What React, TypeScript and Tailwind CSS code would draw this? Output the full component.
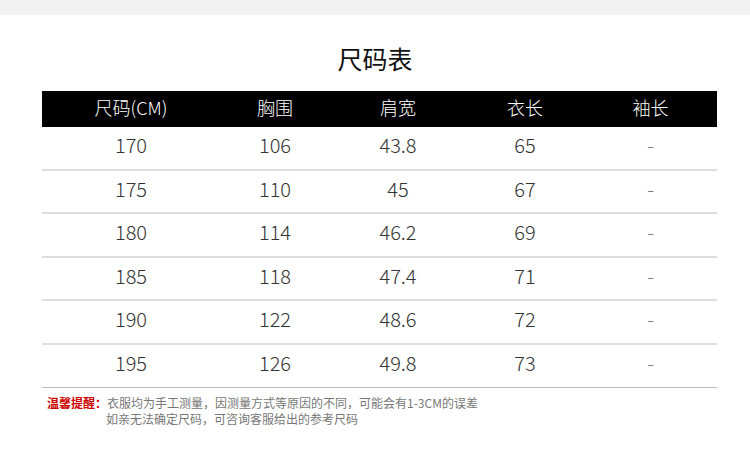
const FONT = { fontFamily: '"Noto Sans CJK SC", "Noto Sans", sans-serif' };

const COLS = ['w-[178px]', 'w-[110px]', 'w-[136px]', 'w-[118px]', 'w-[133px]'];
const HEAD = ['尺码(CM)', '胸围', '肩宽', '衣长', '袖长'];

const ROWS = [
  ['170', '106', '43.8', '65', '-'],
  ['175', '110', '45', '67', '-'],
  ['180', '114', '46.2', '69', '-'],
  ['185', '118', '47.4', '71', '-'],
  ['190', '122', '48.6', '72', '-'],
  ['195', '126', '49.8', '73', '-'],
];

export default function App() {
  return (
    <div className="w-[750px] h-[452px] bg-white overflow-hidden" style={FONT}>
      <div className="h-[15px] bg-[#f2f2f2]" />

      <h1 className="h-[76px] pt-[25px] text-center text-[25px] leading-[36px] text-[#111] font-normal">
        尺码表
      </h1>

      <div className="mx-[42px] w-[675px]">
        {/* header */}
        <div className="flex h-[36px] pb-[3px] bg-black text-white text-[18px] font-light items-center">
          {HEAD.map((h, i) => (
            <div key={h} className={`${COLS[i]} text-center`}>
              {h}
            </div>
          ))}
        </div>

        {/* rows */}
        {ROWS.map((r, ri) => (
          <div
            key={r[0]}
            className={`flex items-center pb-[5px] text-[20px] font-light text-[#333] ${
              ri === ROWS.length - 1
                ? 'h-[43.5px] border-b border-[#bbb]'
                : 'h-[43.5px] border-b-2 border-[#ddd]'
            }`}
          >
            {r.map((v, i) => (
              <div key={i} className={`${COLS[i]} text-center ${i === 4 ? 'text-[#777]' : ''}`}>
                {v}
              </div>
            ))}
          </div>
        ))}
      </div>

      {/* note */}
      <div className="ml-[47px] mt-[7px] text-[12px] leading-[16px] text-[#777]">
        <div>
          <span className="text-[#c00] font-bold">温馨提醒：</span>
          衣服均为手工测量，因测量方式等原因的不同，可能会有1-3CM的误差
        </div>
        <div className="pl-[59px]">如亲无法确定尺码，可咨询客服给出的参考尺码</div>
      </div>
    </div>
  );
}
